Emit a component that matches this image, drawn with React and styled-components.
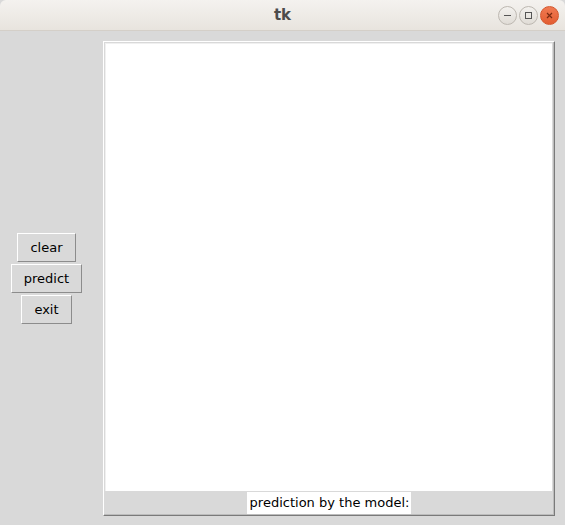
import styled, { createGlobalStyle } from "styled-components";

const Global = createGlobalStyle`
  html, body { margin: 0; padding: 0; }
  body { background: #d9d9d9; font-family: "DejaVu Sans", sans-serif; }
`;

const Window = styled.div`
  width: 565px;
  height: 525px;
  display: flex;
  flex-direction: column;
  background: #d9d9d9;
  overflow: hidden;
`;

const TitleBar = styled.div`
  height: 30px;
  flex: none;
  position: relative;
  display: flex;
  align-items: center;
  justify-content: center;
  background: linear-gradient(#f4f2ef, #e8e4de);
  border-bottom: 1px solid #d4cfc8;
  border-radius: 6px 6px 0 0;
`;

const Title = styled.span`
  font-family: "DejaVu Sans", sans-serif;
  font-weight: 700;
  font-size: 15px;
  color: #4c4c4c;
`;

const Controls = styled.div`
  position: absolute;
  right: 6px;
  top: 6px;
  display: flex;
  gap: 2px;
`;

const Ctl = styled.div`
  width: 17px;
  height: 17px;
  border-radius: 50%;
  display: flex;
  align-items: center;
  justify-content: center;
  background: ${({ $close }) => ($close ? "linear-gradient(#f07a52, #e35d31)" : "linear-gradient(#f3f1ee, #e0dcd6)")};
  border: 1px solid ${({ $close }) => ($close ? "#d4562c" : "#bdb8b1")};
`;

const Body = styled.div`
  flex: 1;
  display: flex;
  align-items: center;
  padding: 9px 10px 9px 0;
`;

const Side = styled.div`
  width: 93px;
  margin-right: 10px;
  display: flex;
  flex-direction: column;
  align-items: center;
  gap: 2px;
`;

const Button = styled.button`
  height: 29px;
  padding: 0 12px;
  background: #d9d9d9;
  border: 1px solid;
  border-color: #ffffff #8c8c8c #8c8c8c #ffffff;
  font-family: "DejaVu Sans", sans-serif;
  font-size: 13px;
  color: #000;
  margin: 0;
`;

const Frame = styled.div`
  width: 452px;
  height: 475px;
  box-sizing: border-box;
  border: 1px solid;
  border-color: #ffffff #7a7a7a #7a7a7a #ffffff;
  box-shadow: inset -1px -1px 0 #bcbcbc;
  display: flex;
  flex-direction: column;
  align-items: center;
`;

const Canvas = styled.div`
  align-self: stretch;
  margin: 1px 2px 0 1px;
  height: 447px;
  background: #ffffff;
  border-top: 1px solid #f0f0f0;
  border-left: 1px solid #f0f0f0;
`;

const Result = styled.div`
  margin-top: 1px;
  height: 22px;
  padding: 0 2px 0 3px;
  background: #ffffff;
  display: flex;
  align-items: center;
  font-size: 13px;
  color: #000;
`;

export default function App() {
  return (
    <Window>
      <Global />
      <TitleBar>
        <Title>tk</Title>
        <Controls>
          <Ctl>
            <svg width="9" height="9" viewBox="0 0 9 9"><path d="M1 4.5h7" stroke="#555" strokeWidth="1" /></svg>
          </Ctl>
          <Ctl>
            <svg width="9" height="9" viewBox="0 0 9 9"><rect x="1.5" y="1.5" width="6" height="6" fill="none" stroke="#555" strokeWidth="1" /></svg>
          </Ctl>
          <Ctl $close>
            <svg width="9" height="9" viewBox="0 0 9 9"><path d="M2 2l5 5M7 2l-5 5" stroke="#7a2a10" strokeWidth="1.2" /></svg>
          </Ctl>
        </Controls>
      </TitleBar>
      <Body>
        <Side>
          <Button>clear</Button>
          <Button>predict</Button>
          <Button>exit</Button>
        </Side>
        <Frame>
          <Canvas />
          <Result>prediction by the model:</Result>
        </Frame>
      </Body>
    </Window>
  );
}
